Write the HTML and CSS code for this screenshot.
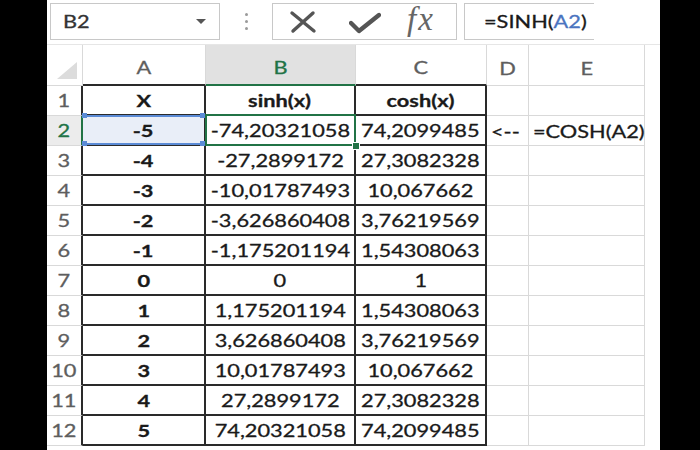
FILE: index.html
```html
<!DOCTYPE html>
<html>
<head>
<meta charset="utf-8">
<link rel="stylesheet" href="styles.css">
</head>
<body>
<div class="frame">
  <div class="app">
    <div class="toolbar">
      <div class="namebox">
        <span class="t tl">B2</span>
        <svg class="caret" width="10" height="6" viewBox="0 0 10 6"><path d="M0 0 L10 0 L5 5 Z" fill="#555"/></svg>
      </div>
      <div class="dots"><i></i><i></i><i></i></div>
      <div class="buttons">
        <svg class="ico-x" width="28" height="24" viewBox="0 0 28 24"><path d="M3 3 L25 21 M24 3 L4 21" stroke="#555" stroke-width="3.4" stroke-linecap="round" fill="none"/></svg>
        <svg class="ico-ok" width="32" height="22" viewBox="0 0 32 22"><path d="M2 11 L10 19 L30 3" stroke="#555" stroke-width="4.4" stroke-linecap="round" stroke-linejoin="round" fill="none"/></svg>
        <span class="fx">fx</span>
      </div>
      <div class="formula"><span class="t tl">=SINH(<span class="ref-txt">A2</span>)</span></div>
    </div>
    <div class="sheet">
      <div class="c corner"><svg width="20" height="17" viewBox="0 0 20 17"><path d="M20 0 L20 17 L0 17 Z" fill="#dcdcdc"/></svg></div>
      <div class="c hd dk"><span class="t">A</span></div>
      <div class="c hd dk hsel"><span class="t">B</span></div>
      <div class="c hd dk"><span class="t">C</span></div>
      <div class="c hd"><span class="t">D</span></div>
      <div class="c hd"><span class="t">E</span></div>

      <div class="c rn"><span class="t">1</span></div>
      <div class="c tb b"><span class="t">X</span></div>
      <div class="c tb b"><span class="t">sinh(x)</span></div>
      <div class="c tb b"><span class="t">cosh(x)</span></div>
      <div class="c"></div>
      <div class="c"></div>

      <div class="c rn rsel"><span class="t">2</span></div>
      <div class="c tb b ref"><span class="t">-5</span></div>
      <div class="c tb sel"><span class="t">-74,20321058</span></div>
      <div class="c tb"><span class="t">74,2099485</span></div>
      <div class="c lt"><span class="t tl">&lt;--</span></div>
      <div class="c lt"><span class="t tl">=COSH(A2)</span></div>

      <div class="c rn"><span class="t">3</span></div>
      <div class="c tb b"><span class="t">-4</span></div>
      <div class="c tb"><span class="t">-27,2899172</span></div>
      <div class="c tb"><span class="t">27,3082328</span></div>
      <div class="c"></div>
      <div class="c"></div>

      <div class="c rn"><span class="t">4</span></div>
      <div class="c tb b"><span class="t">-3</span></div>
      <div class="c tb"><span class="t">-10,01787493</span></div>
      <div class="c tb"><span class="t">10,067662</span></div>
      <div class="c"></div>
      <div class="c"></div>

      <div class="c rn"><span class="t">5</span></div>
      <div class="c tb b"><span class="t">-2</span></div>
      <div class="c tb"><span class="t">-3,626860408</span></div>
      <div class="c tb"><span class="t">3,76219569</span></div>
      <div class="c"></div>
      <div class="c"></div>

      <div class="c rn"><span class="t">6</span></div>
      <div class="c tb b"><span class="t">-1</span></div>
      <div class="c tb"><span class="t">-1,175201194</span></div>
      <div class="c tb"><span class="t">1,54308063</span></div>
      <div class="c"></div>
      <div class="c"></div>

      <div class="c rn"><span class="t">7</span></div>
      <div class="c tb b"><span class="t">0</span></div>
      <div class="c tb"><span class="t">0</span></div>
      <div class="c tb"><span class="t">1</span></div>
      <div class="c"></div>
      <div class="c"></div>

      <div class="c rn"><span class="t">8</span></div>
      <div class="c tb b"><span class="t">1</span></div>
      <div class="c tb"><span class="t">1,175201194</span></div>
      <div class="c tb"><span class="t">1,54308063</span></div>
      <div class="c"></div>
      <div class="c"></div>

      <div class="c rn"><span class="t">9</span></div>
      <div class="c tb b"><span class="t">2</span></div>
      <div class="c tb"><span class="t">3,626860408</span></div>
      <div class="c tb"><span class="t">3,76219569</span></div>
      <div class="c"></div>
      <div class="c"></div>

      <div class="c rn"><span class="t">10</span></div>
      <div class="c tb b"><span class="t">3</span></div>
      <div class="c tb"><span class="t">10,01787493</span></div>
      <div class="c tb"><span class="t">10,067662</span></div>
      <div class="c"></div>
      <div class="c"></div>

      <div class="c rn"><span class="t">11</span></div>
      <div class="c tb b"><span class="t">4</span></div>
      <div class="c tb"><span class="t">27,2899172</span></div>
      <div class="c tb"><span class="t">27,3082328</span></div>
      <div class="c"></div>
      <div class="c"></div>

      <div class="c rn"><span class="t">12</span></div>
      <div class="c tb b"><span class="t">5</span></div>
      <div class="c tb"><span class="t">74,20321058</span></div>
      <div class="c tb"><span class="t">74,2099485</span></div>
      <div class="c"></div>
      <div class="c"></div>
    </div>
  </div>
</div>
</body>
</html>
```
FILE: styles.css
```css
html, body {
  margin: 0;
  padding: 0;
  background: #000;
}
.frame {
  width: 700px;
  height: 450px;
  overflow: hidden;
  display: flex;
}
.app {
  margin-left: 47px;
  width: 613px;
  height: 450px;
  background: #fff;
  font-family: Lato, "Open Sans", sans-serif;
  font-size: 17px;
  color: #1a1a1a;
  -webkit-text-stroke: 0.3px currentColor;
}
.t {
  display: inline-block;
  transform: scaleX(1.28);
  white-space: nowrap;
}
.tl {
  transform-origin: left center;
}

/* toolbar */
.toolbar {
  height: 45px;
  box-sizing: border-box;
  border-bottom: 1px solid #e6e6e6;
  display: flex;
  align-items: flex-start;
  padding: 3px 0 0 3px;
}
.namebox {
  width: 170px;
  height: 37px;
  box-sizing: border-box;
  border: 1px solid #c8c8c8;
  display: flex;
  align-items: center;
  justify-content: space-between;
  padding: 0 13px 0 12px;
  color: #333;
}
.caret {
  display: block;
}
.dots {
  width: 52px;
  height: 37px;
  display: flex;
  flex-direction: column;
  align-items: center;
  justify-content: center;
  gap: 4px;
}
.dots i {
  display: block;
  width: 3px;
  height: 3px;
  border-radius: 50%;
  background: #9a9a9a;
}
.buttons {
  width: 185px;
  height: 37px;
  box-sizing: border-box;
  border: 1px solid #c8c8c8;
  display: flex;
  align-items: center;
  padding-left: 16px;
}
.ico-x {
  display: block;
}
.ico-ok {
  display: block;
  margin-left: 32px;
  margin-top: 2px;
}
.fx {
  font-family: "Liberation Serif", serif;
  font-style: italic;
  font-size: 33px;
  color: #666;
  margin-left: 26px;
  margin-top: -4px;
  letter-spacing: 2px;
  -webkit-text-stroke: 0;
}
.formula {
  margin-left: 7px;
  width: 130px;
  height: 37px;
  box-sizing: border-box;
  border: 1px solid #c8c8c8;
  border-right: none;
  display: flex;
  align-items: center;
  padding-left: 19px;
  color: #1a1a1a;
}
.ref-txt {
  color: #4a74c0;
}

/* sheet */
.sheet {
  display: grid;
  grid-template-columns: 36px 123px 150px 131px 42px 116px;
  grid-template-rows: 41px repeat(12, 30px);
}
.c {
  box-sizing: border-box;
  border-right: 1px solid #d9d9d9;
  border-bottom: 1px solid #d9d9d9;
  display: flex;
  align-items: center;
  justify-content: center;
  white-space: nowrap;
  overflow: visible;
}
.corner {
  align-items: flex-end;
  justify-content: flex-end;
  padding: 0 5px 6px 0;
}
.corner svg {
  display: block;
}
.hd {
  color: #5e5e5e;
  padding-top: 6px;
}
.hd.dk {
  border-bottom: 2px solid #2a2a2a;
}
.hsel {
  background: #e1e1e1;
  color: #217346;
  border-bottom: 2px solid #217346 !important;
}
.rn {
  color: #5e5e5e;
  border-right: 2px solid #2a2a2a;
}
.rsel {
  color: #217346;
  background: #ececec;
  border-right: 2px solid #217346;
}
.tb {
  border-right: 2px solid #2a2a2a;
  border-bottom: 2px solid #2a2a2a;
  padding-top: 1px;
}
.b {
  font-weight: 700;
}
.lt {
  justify-content: flex-start;
  padding-left: 4px;
  padding-top: 1px;
}
.ref {
  background: #e9eef8;
  position: relative;
}
.ref::before {
  content: "";
  position: absolute;
  left: 0;
  top: -1px;
  right: 0;
  bottom: -1px;
  border-top: 2px solid #5b8bd6;
  border-bottom: 2px solid #5b8bd6;
}
.ref::after {
  content: "";
  position: absolute;
  left: -1px;
  top: -3px;
  width: 5px;
  height: 5px;
  background: #5b8bd6;
  box-shadow: 118px 0 0 #5b8bd6, 0 28px 0 #5b8bd6, 118px 28px 0 #5b8bd6;
}
.sel {
  position: relative;
}
.sel::before {
  content: "";
  position: absolute;
  left: -1px;
  top: -2px;
  right: -2px;
  bottom: -2px;
  border: 2px solid #217346;
}
.sel::after {
  content: "";
  position: absolute;
  right: -6px;
  bottom: -6px;
  width: 6px;
  height: 6px;
  background: #217346;
  border: 1px solid #fff;
}
```
